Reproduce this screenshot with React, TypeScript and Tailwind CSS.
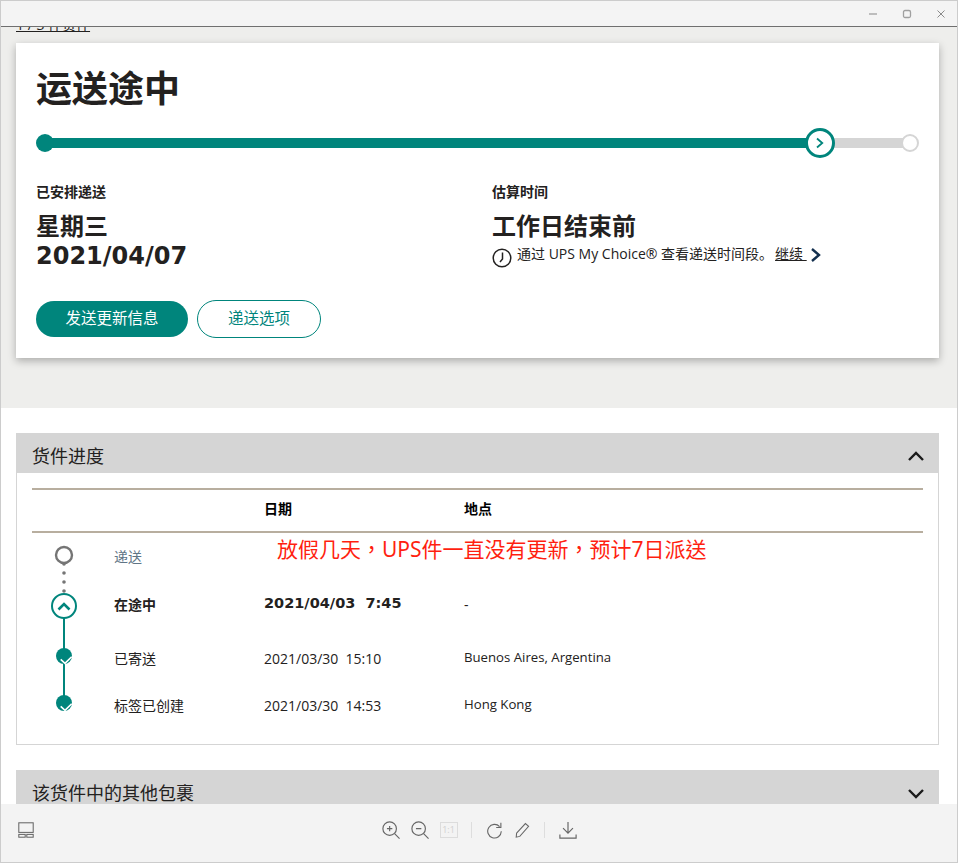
import React from "react";

function Chevron({ dir, className }: { dir: "up" | "down" | "right"; className?: string }) {
  const d = dir === "up" ? "M1 12 L8 5 L15 12" : dir === "down" ? "M1 5 L8 12 L15 5" : "M4 2 L11 8 L4 14";
  return (
    <svg viewBox="0 0 16 16" className={className} fill="none" stroke="currentColor" strokeWidth="2.4">
      <path d={d} />
    </svg>
  );
}

function Timeline() {
  return (
    <svg viewBox="0 0 64 190" className="w-[64px] h-[190px]" fill="none">
      <circle cx="32" cy="22" r="8" stroke="#757575" strokeWidth="2.4" fill="#fff" />
      <circle cx="32" cy="31" r="1.8" fill="#757575" />
      <circle cx="32" cy="40" r="1.8" fill="#757575" />
      <circle cx="32" cy="49" r="1.8" fill="#757575" />
      <circle cx="32" cy="58" r="1.8" fill="#757575" />
      <line x1="32" y1="85" x2="32" y2="170" stroke="#00857c" strokeWidth="2" />
      <circle cx="32" cy="73" r="12" stroke="#00857c" strokeWidth="2" fill="#fff" />
      <path d="M26.5 76.5 L32 71 L37.5 76.5" stroke="#00857c" strokeWidth="2.6" />
      <circle cx="32" cy="123" r="8" fill="#00857c" />
      <path d="M28.7 126.3 L33 130.3 L39.7 123.7" stroke="#fff" strokeWidth="1.6" />
      <circle cx="32" cy="170" r="8" fill="#00857c" />
      <path d="M28.7 173.3 L33 177.3 L39.7 170.7" stroke="#fff" strokeWidth="1.6" />
    </svg>
  );
}

function ToolIcon({ children, className }: { children: React.ReactNode; className?: string }) {
  return (
    <svg viewBox="0 0 20 20" className={className ?? "w-[18px] h-[18px]"} fill="none" stroke="#666" strokeWidth="1.3">
      {children}
    </svg>
  );
}

export default function App() {
  return (
    <div className="relative w-[958px] h-[863px] flex flex-col overflow-hidden border border-[#cccccc] bg-white text-[#232120] font-['Open_Sans','Noto_Sans_CJK_SC',sans-serif]">
      <header className="h-[26px] shrink-0 bg-[#f4f4f4] border-b border-[#6f6f6f] flex items-center justify-end gap-[18px] pr-[8px]">
        <svg viewBox="0 0 16 16" className="w-4 h-4" stroke="#a0a0a0" fill="none"><path d="M4 8 H12" strokeWidth="1.3" /></svg>
        <svg viewBox="0 0 16 16" className="w-4 h-4" stroke="#a0a0a0" fill="none"><rect x="4.5" y="4.5" width="7" height="7" rx="1.5" strokeWidth="1.3" /></svg>
        <svg viewBox="0 0 16 16" className="w-4 h-4" stroke="#8a8a8a" fill="none"><path d="M4.5 4.5 L11.5 11.5 M11.5 4.5 L4.5 11.5" strokeWidth="1" /></svg>
      </header>

      <main className="flex-1 min-h-0 overflow-hidden">
        <section className="flow-root h-[381px] bg-[#eeeeec] pl-[15px] pr-[18px]">
          <a className="block h-4 -mt-[10px] text-[14px] leading-[16px] underline w-fit">1 / 3 件货件</a>
          <div className="mt-[10px] h-[315px] bg-white shadow-[0_3px_8px_rgba(0,0,0,0.28)] px-5 pt-[19px]">
            <h1 className="text-[36px] leading-[48px] font-bold font-['Noto_Sans_CJK_SC',sans-serif]">运送途中</h1>

            <div className="relative mt-[18px] h-[30px] flex items-center pl-2 pr-2">
              <div className="h-[10px] w-[776px] bg-[#00857c]" />
              <div className="h-[10px] flex-1 bg-[#d5d5d5]" />
              <span className="absolute left-0 top-[6px] w-[18px] h-[18px] rounded-full bg-[#00857c]" />
              <span className="absolute left-[769px] top-0 w-[30px] h-[30px] rounded-full bg-white border-[3px] border-[#00857c] flex items-center justify-center text-[#00857c]">
                <Chevron dir="right" className="w-3 h-3" />
              </span>
              <span className="absolute right-0 top-[6px] w-[18px] h-[18px] rounded-full bg-white border-2 border-[#d5d5d5]" />
            </div>

            <div className="mt-[23px] grid grid-cols-[456px_1fr]">
              <div>
                <div className="text-[14px] leading-[20px] font-bold font-['Noto_Sans_CJK_SC',sans-serif]">已安排递送</div>
                <div className="mt-[12px] text-[24px] leading-[29px] font-bold font-['DejaVu_Sans','Noto_Sans_CJK_SC',sans-serif]">
                  星期三<br />2021/04/07
                </div>
              </div>
              <div>
                <div className="text-[14px] leading-[20px] font-bold font-['Noto_Sans_CJK_SC',sans-serif]">估算时间</div>
                <div className="mt-[9px] text-[24px] leading-[29px] font-bold font-['Noto_Sans_CJK_SC',sans-serif]">工作日结束前</div>
                <div className="flex items-start mt-[5px]">
                  <svg viewBox="0 0 20 20" className="w-5 h-5 mt-[4px] mr-[5px]" fill="none" stroke="#232120" strokeWidth="1.5">
                    <circle cx="10" cy="10" r="8.8" />
                    <path d="M10.5 4.5 V11 L8 14" />
                  </svg>
                  <span className="text-[14px] leading-[20px] whitespace-pre">通过 UPS My Choice® 查看递送时间段。</span>
                  <span className="ml-[2px] text-[14px] leading-[20px] underline whitespace-pre">继续 </span>
                  <Chevron dir="right" className="ml-[1px] mt-[3px] w-4 h-4 text-[#14304f]" />
                </div>
              </div>
            </div>

            <div className="mt-[29px] flex items-center gap-[9px]">
              <button className="w-[152px] h-[36px] rounded-full bg-[#00857c] text-white text-[15.5px]">发送更新信息</button>
              <button className="w-[124px] h-[38px] rounded-full bg-white border border-[#00857c] text-[#00857c] text-[15.5px]">递送选项</button>
            </div>
          </div>
        </section>

        <section className="mt-[25px] ml-[15px] mr-[18px]">
          <div className="h-10 bg-[#d5d5d5] flex items-center justify-between pt-[6px] pl-4 pr-[15px] text-[18px]">
            <span>货件进度</span>
            <Chevron dir="up" className="w-4 h-4 text-[#1b1b1b]" />
          </div>
          <div className="relative h-[272px] border-x border-b border-[#d5d5d5] px-[15px] pt-[15px]">
            <div className="border-t-2 border-b-2 border-[#b8ae9f] h-[45px] pb-[4px] grid grid-cols-[232px_200px_1fr] items-center text-[14px] font-bold text-black font-['Noto_Sans_CJK_SC',sans-serif]">
              <span className="col-start-2">日期</span>
              <span>地点</span>
            </div>
            <div className="grid grid-cols-[82px_150px_200px_1fr] grid-rows-[47px_48px_60px_34px] items-center text-[14px]">
              <div className="row-span-4 self-start h-[190px]">
                <Timeline />
              </div>
              <span className="text-[#5f7586] leading-[20px]">递送</span>
              <span />
              <span />
              <span className="font-bold font-['Noto_Sans_CJK_SC',sans-serif]">在途中</span>
              <span className="font-bold whitespace-pre text-[14.5px] font-['DejaVu_Sans',sans-serif]">2021/04/03  7:45</span>
              <span>-</span>
              <span>已寄送</span>
              <span className="whitespace-pre">2021/03/30  15:10</span>
              <span className="text-[13.2px]">Buenos Aires, Argentina</span>
              <span>标签已创建</span>
              <span className="whitespace-pre">2021/03/30  14:53</span>
              <span className="text-[13.2px]">Hong Kong</span>
            </div>
            <div className="absolute left-[260px] top-[60px] text-[21px] leading-[32px] text-[#ff1f10] whitespace-nowrap font-['Noto_Sans','Noto_Sans_CJK_TC',sans-serif]">
              放假几天，UPS件一直没有更新，预计7日派送
            </div>
          </div>
          <div className="mt-[25px] h-10 bg-[#d5d5d5] flex items-center justify-between pt-[6px] pl-4 pr-[15px] text-[18px]">
            <span>该货件中的其他包裹</span>
            <Chevron dir="down" className="w-4 h-4 text-[#1b1b1b]" />
          </div>
        </section>
      </main>

      <footer className="h-[58px] shrink-0 bg-[#f3f3f3] grid grid-cols-[1fr_auto_1fr] items-center pb-[6px]">
        <div className="pl-[17px]">
          <ToolIcon className="w-4 h-4">
            <rect x="1" y="1" width="18" height="12" />
            <rect x="1" y="15.5" width="8" height="3.5" />
            <rect x="11" y="15.5" width="8" height="3.5" />
          </ToolIcon>
        </div>
        <div className="flex items-center">
          <ToolIcon className="w-[18px] h-[18px] mr-[11px]">
            <circle cx="8.5" cy="8.5" r="7.5" />
            <path d="M14 14 L19.5 19.5 M5.5 8.5 H11.5 M8.5 5.5 V11.5" />
          </ToolIcon>
          <ToolIcon className="w-[18px] h-[18px] mr-[11px]">
            <circle cx="8.5" cy="8.5" r="7.5" />
            <path d="M14 14 L19.5 19.5 M5.5 8.5 H11.5" />
          </ToolIcon>
          <span className="w-[18px] h-[16px] border border-[#dcdcdc] text-[9px] leading-[14px] text-center text-[#d0d0d0] mr-[13px]">1:1</span>
          <span className="w-px h-4 bg-[#dddddd] mr-[14px]" />
          <ToolIcon className="w-[17px] h-[17px] mr-[12px]">
            <path d="M16 5.5 A8 8 0 1 0 18 11" />
            <path d="M17.5 1 V6.5 H12" />
          </ToolIcon>
          <ToolIcon className="w-4 h-[18px] mr-[13px]">
            <path d="M2 14 L13 2 L17 5.5 L6 18 L1.5 19 Z" />
          </ToolIcon>
          <span className="w-px h-4 bg-[#dddddd] mr-[14px]" />
          <ToolIcon className="w-[18px] h-[18px]">
            <path d="M10 1 V13 M4.5 8 L10 13.5 L15.5 8 M1 15 V19 H19 V15" />
          </ToolIcon>
        </div>
        <span />
      </footer>
    </div>
  );
}
